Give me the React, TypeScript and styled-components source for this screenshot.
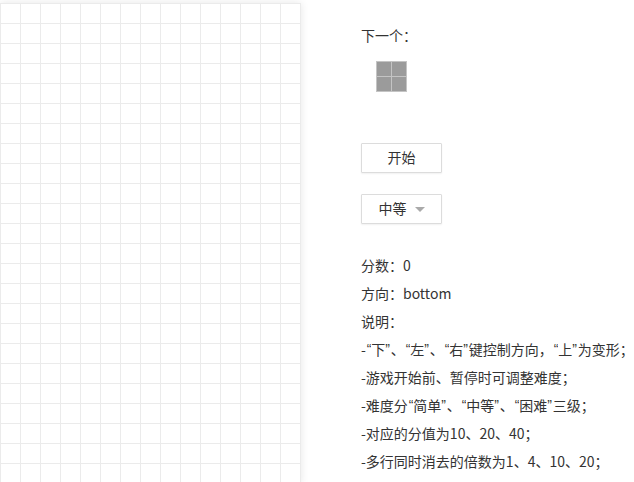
import React, { FC } from 'react';
import styled, { createGlobalStyle } from 'styled-components';

const GlobalStyle = createGlobalStyle`
	html, body {
		margin: 0;
		padding: 0;
		background: #fff;
		overflow: hidden;
	}
	body {
		font-family: "Noto Sans CJK SC", "Noto Sans", sans-serif;
		font-size: 14px;
		color: #333;
	}
`;

const COLS = 15;
const ROWS = 24;

const Page = styled.div`
	display: flex;
	align-items: flex-start;
	width: 634px;
	height: 482px;
	overflow: hidden;
`;

const Board = styled.div`
	margin-top: 3px;
	display: grid;
	grid-template-columns: repeat(${COLS}, 20px);
	grid-auto-rows: 20px;
	border-left: 1px solid #ebebeb;
	border-top: 1px solid #ebebeb;
	box-shadow: 0 0 8px rgba(0, 0, 0, 0.1);
	background: #fff;
`;

const Cell = styled.div`
	box-sizing: border-box;
	border-right: 1px solid #ebebeb;
	border-bottom: 1px solid #ebebeb;
`;

const Panel = styled.div`
	margin-left: 60px;
	padding-top: 24px;
	display: flex;
	flex-direction: column;
	align-items: flex-start;
`;

const Label = styled.div`
	line-height: 22px;
`;

const Preview = styled.div`
	margin: 15px 0 0 15px;
	display: grid;
	grid-template-columns: repeat(2, 14px);
	grid-auto-rows: 14px;
	gap: 1px;
	padding: 1px;
	background: #c4c4c4;
`;

const Block = styled.div`
	background: #9b9b9b;
`;

const Button = styled.button<{ $top: number }>`
	box-sizing: border-box;
	width: 81px;
	height: 30px;
	margin-top: ${({ $top }) => $top}px;
	display: flex;
	align-items: center;
	justify-content: center;
	gap: 6px;
	padding: 0 0 2px;
	border: 1px solid #dcdcdc;
	border-radius: 1px;
	background: #fff;
	box-shadow: 0 1px 2px rgba(0, 0, 0, 0.06);
	font-family: inherit;
	font-size: 14px;
	color: #333;
`;

const Caret = styled.span`
	width: 0;
	height: 0;
	margin: 2px 0 0 2px;
	border-left: 5px solid transparent;
	border-right: 5px solid transparent;
	border-top: 5px solid #aaa;
`;

const Info = styled.div`
	margin-top: 27px;
`;

const Line = styled.p`
	margin: 0;
	line-height: 28px;
	white-space: nowrap;
`;

const Quote = styled.span<{ $open: boolean }>`
	display: inline-block;
	width: 5.5px;
	overflow: hidden;
	text-align: ${({ $open }) => ($open ? 'right' : 'left')};
	font-family: "Liberation Sans", sans-serif;
	font-size: 14px;
	vertical-align: top;
`;

const rules = [
	'分数：0',
	'方向：bottom',
	'说明：',
	'-“下”、“左”、“右”键控制方向，“上”为变形；',
	'-游戏开始前、暂停时可调整难度；',
	'-难度分“简单”、“中等”、“困难”三级；',
	'-对应的分值为10、20、40；',
	'-多行同时消去的倍数为1、4、10、20；',
];

const renderText = (text: string) =>
	text.split(/([“”])/).map((part, i) =>
		part === '“' || part === '”' ? (
			<Quote key={i} $open={part === '“'}>
				{part}
			</Quote>
		) : (
			part
		),
	);

const App: FC = () => {
	const cells = Array.from({ length: COLS * ROWS }, (_, i) => <Cell key={i} />);
	return (
		<>
			<GlobalStyle />
			<Page>
				<Board>{cells}</Board>
				<Panel>
					<Label>下一个：</Label>
					<Preview>
						<Block />
						<Block />
						<Block />
						<Block />
					</Preview>
					<Button $top={51}>开始</Button>
					<Button $top={21}>
						中等
						<Caret />
					</Button>
					<Info>
						{rules.map((text) => (
							<Line key={text}>{renderText(text)}</Line>
						))}
					</Info>
				</Panel>
			</Page>
		</>
	);
};

export default App;
